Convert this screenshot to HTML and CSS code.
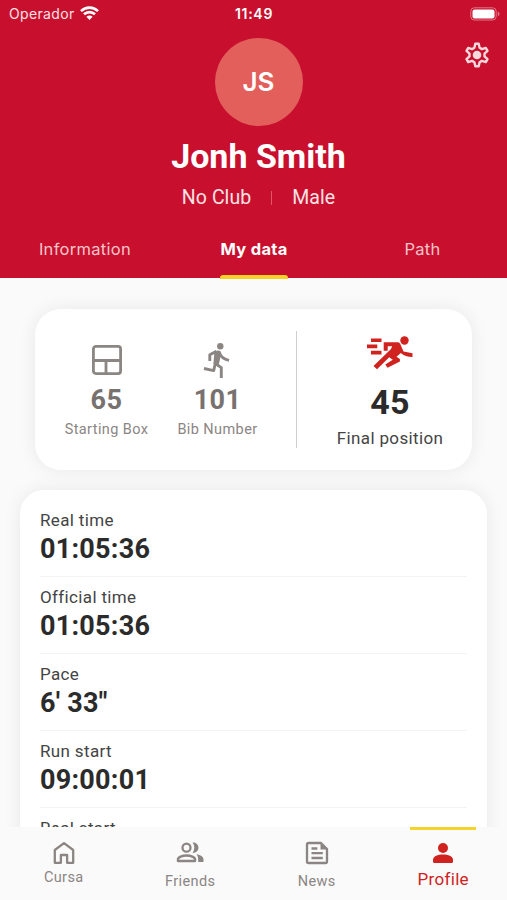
FILE: index.html
```html
<!DOCTYPE html>
<html lang="en">
<head>
<meta charset="utf-8">
<title>Profile</title>
<link rel="stylesheet" href="styles.css">
</head>
<body>
<div class="app">
  <header class="header">
    <div class="status">
      <div class="carrier"><span>Operador</span>
        <svg class="wifi" width="19" height="14" viewBox="0 0 19 14" fill="none" stroke="#fff" stroke-width="2.7"><path d="M1 5.100C5.800.4 13.200.4 18 5.100"/><path d="M4 8.300c3.200-3 7.800-3 11 0"/><path d="M6.400 10.800c1.800-1.700 4.400-1.700 6.200 0L9.500 13.900z" fill="#fff" stroke="none"/></svg>
      </div>
      <time class="clock">11:49</time>
      <svg class="battery" width="31" height="14" viewBox="0 0 31 14"><rect x=".8" y=".8" width="25.400" height="12.200" rx="3.500" fill="none" stroke="#e27886"/><rect x="2.500" y="2.500" width="22" height="9" rx="2" fill="#fff"/><path d="M27.800 4.600c2.300 1 2.300 3.800 0 4.800z" fill="#e27886"/></svg>
    </div>
    <svg class="gear" width="26" height="26" viewBox="0 0 26 26"><path d="M11.300 1.800h3.400l.9 4 2.300 1.300 3.900-1.200 1.700 2.900-3 2.800v2.800l3 2.800-1.700 2.900-3.900-1.200-2.300 1.300-.9 4h-3.400l-.9-4-2.300-1.300-3.900 1.200-1.700-2.900 3-2.800v-2.800l-3-2.800 1.700-2.900 3.900 1.200 2.300-1.300z" fill="none" stroke="#fbd9dc" stroke-width="2.400" stroke-linejoin="round"/><circle cx="13" cy="13" r="4.300" fill="#fbd9dc"/></svg>
    <div class="avatar">JS</div>
    <h1 class="name">Jonh Smith</h1>
    <div class="meta"><span>No Club</span><i class="bar"></i><span>Male</span></div>
    <nav class="tabs"><a class="tab">Information</a><a class="tab active">My data</a><a class="tab path">Path</a></nav>
  </header>
  <main class="content">
    <section class="summary">
      <div class="stat box">
        <svg width="30" height="30" viewBox="0 0 30 30" fill="none" stroke="#8b8583" stroke-width="2.800"><rect x="1.400" y="1.400" width="27.200" height="27.200" rx="2.500"/><path d="M1.400 15.500h27.200M14 15.500v13.100"/></svg>
        <strong>65</strong><span>Starting Box</span>
      </div>
      <div class="stat bib">
        <svg width="28" height="36" viewBox="0 0 28 36" fill="none" stroke="#8b8583" stroke-width="2.900" stroke-linejoin="round"><circle cx="17.300" cy="4.200" r="3.200" fill="#8b8583" stroke="none"/><path d="M13.300 9.400L6.800 12.700V19M16.500 11C18 15.500 21 17.200 26 18.300M12.500 20.500L10.700 28.600 1 26.500M12.300 21.500L18.300 25.600V36"/><path d="M11.500 8.900l4.500-.5c1.500.3 2.500 2 2 4l-2.300 10.500-5.300-.8z" fill="#8b8583" stroke="none"/></svg>
        <strong>101</strong><span>Bib Number</span>
      </div>
      <div class="rule"></div>
      <div class="final">
        <svg width="46" height="34" viewBox="0 0 46 34" fill="#d0221e"><path d="M4 2.500h10.500v3.600H4zM0 8.500h10.300v3.800H0zM4 14.800h10.500v3.800H4z"/><circle cx="37.500" cy="4.500" r="4.200"/><path d="M16.700 6.300h14.600l1.800 1.200 3.400 8 9 1.700v3.900c-5 0-8.800-1.300-11.700-4.100l-4.300 3.800 3.400 2.200v2.600l-12.400 6.200-2.200-3.400 7.500-4.600-3.600-2.600L10 33.200 6.500 29.900l17.500-17 1.200-2.700h-4.500v4.500h-4z"/></svg>
        <strong>45</strong><span>Final position</span>
      </div>
    </section>
    <section class="results">
      <div class="row"><span>Real time</span><strong>01:05:36</strong></div>
      <div class="row"><span>Official time</span><strong>01:05:36</strong></div>
      <div class="row"><span>Pace</span><strong>6' 33"</strong></div>
      <div class="row"><span>Run start</span><strong>09:00:01</strong></div>
      <div class="row"><span>Real start</span></div>
    </section>
  </main>
  <nav class="bottom">
    <a class="item cursa"><svg width="24" height="24" viewBox="0 0 24 24" fill="none" stroke="#8b8583" stroke-width="2.300" stroke-linejoin="round"><path d="M2.800 9L12 2.200 21.200 9v12.800h-6.100V14H8.900v7.800H2.800z"/></svg><span>Cursa</span></a>
    <a class="item"><svg width="28" height="24" viewBox="0 0 28 24" fill="none" stroke="#8b8583" stroke-width="2.300"><circle cx="10.500" cy="6.700" r="4"/><path d="M1.900 20v-1.500c0-2.300 4.400-4 8.600-4s8.600 1.700 8.600 4V20z" stroke-linejoin="round"/><path d="M16.500 1.500c7.600-.6 8.400 10.400 0 10.400 2.400-3 2.400-7.400 0-10.400zM20.500 13.300c4 .7 7 2.300 7 5.300v2.500h-5.300v-2.600c0-2-.5-3.700-1.700-5.200z" fill="#8b8583" stroke="none"/></svg><span>Friends</span></a>
    <a class="item"><svg width="24" height="24" viewBox="0 0 24 24" fill="none" stroke="#8b8583" stroke-width="2.300" stroke-linejoin="round"><path d="M3.500 2H16l6 6v12.500a1.500 1.500 0 0 1-1.500 1.500h-17A1.500 1.500 0 0 1 2 20.500v-17A1.500 1.500 0 0 1 3.500 2zM6.500 7.500h5.800M6.500 12.200h11.300M6.500 17h11.300"/><path d="M15.500 2v6.500H22z" fill="#8b8583" stroke="none"/></svg><span>News</span></a>
    <a class="item profile"><svg width="20" height="20" viewBox="0 0 20 20" fill="#d0221e"><circle cx="10" cy="5" r="5"/><path d="M0 18.500v-1.700C0 13.500 5 11.600 10 11.600s10 1.900 10 5.200v1.700q0 1.500-1.500 1.500h-17Q0 20 0 18.500z"/></svg><span>Profile</span></a>
  </nav>
</div>
</body>
</html>
```
FILE: styles.css
```css
* { box-sizing: border-box; }
body { margin: 0; font-family: Roboto, sans-serif; background: #fafafa; }
.app { height: 900px; display: flex; flex-direction: column; overflow: hidden; }
svg { display: block; flex: none; }

.header { position: relative; height: 278px; flex: none; background: #c8102e; color: #fff; display: flex; flex-direction: column; align-items: center; }
.status { width: 100%; height: 28px; padding: 0 6px 0 9px; display: grid; grid-template-columns: 1fr auto 1fr; align-items: center; font-family: Inter, sans-serif; font-size: 14px; }
.carrier { display: flex; align-items: center; gap: 5px; letter-spacing: .35px; color: #fbe2e5; }
.carrier span, .clock { margin-top: -1px; }
.wifi { margin-top: -2px; }
.clock { font-weight: 600; font-size: 14px; letter-spacing: .7px; margin-left: -2px; }
.battery { justify-self: end; margin-top: -1px; }
.gear { position: absolute; left: 464px; top: 42px; }
.avatar { width: 88px; height: 88px; margin: 10px 0 0 10px; border-radius: 50%; background: #e25f5c; display: flex; align-items: center; justify-content: center; font: 600 26px Inter, sans-serif; padding-bottom: 2px; }
.name { margin: 10px 0 0 10px; font-size: 34px; line-height: 40px; font-weight: 700; letter-spacing: 0; }
.meta { margin: 10px 0 0 10px; display: flex; align-items: center; font-size: 19.500px; line-height: 24px; letter-spacing: .05px; color: #fbe2e5; }
.bar { width: 1px; height: 14px; margin: 0 20px; background: #e05668; }
.tabs { width: 100%; margin-top: auto; display: grid; grid-template-columns: repeat(3, 169px); justify-items: center; font: 16.500px Inter, sans-serif; letter-spacing: .3px; }
.tab { height: 44px; line-height: 30px; color: #f7c4cb; margin-left: 1px; }
.tab.active { position: relative; color: #fff; font-weight: 700; }
.tab.active::after { content: ""; position: absolute; left: 0; right: 0; bottom: -1px; height: 4px; border-radius: 3px 3px 0 0; background: #f5d025; }
.tab.path { margin-left: 0; }

.content { flex: 1; min-height: 0; overflow: hidden; padding: 31px 20px 0; }
.summary { height: 161px; margin: 0 15px; border-radius: 26px; background: #fff; box-shadow: 0 0 18px rgba(0,0,0,.075); display: flex; align-items: flex-start; }
.stat { display: flex; flex-direction: column; align-items: center; flex: none; width: 111px; color: #8b8583; font-size: 14.500px; letter-spacing: .4px; white-space: nowrap; }
.stat svg { height: 36px; }
.stat strong { font-size: 27px; line-height: 32px; margin-top: 6px; color: #777170; letter-spacing: .4px; }
.stat span { line-height: 20px; margin-top: 4px; }
.box { margin-left: 16px; padding-top: 33px; }
.bib { padding-top: 33px; }
.bib svg { margin-left: -2px; }
.rule { flex: none; width: 1px; height: 117px; margin: 22px 0 0 23px; background: #cfcfcf; }
.final { flex: none; width: 186px; display: flex; flex-direction: column; align-items: center; padding-top: 27px; color: #444; font-size: 17px; letter-spacing: .35px; }
.final strong { font-size: 34px; line-height: 40px; margin-top: 12px; color: #2b2b2b; }
.final span { line-height: 24px; margin-top: 4px; }
.results { margin-top: 20px; height: 460px; padding: 10px 20px; border-radius: 24px; background: #fff; box-shadow: 0 0 18px rgba(0,0,0,.075); }
.row { height: 76.900px; display: flex; flex-direction: column; border-bottom: 1px solid #f3f3f3; padding-top: 9px; }
.row span { font-size: 17px; line-height: 22px; letter-spacing: .35px; color: #444; }
.row strong { font-size: 27px; line-height: 36px; letter-spacing: .25px; color: #2b2b2b; }

.bottom { height: 73px; flex: none; display: grid; grid-template-columns: repeat(4, 126.500px); background: #fafafa; position: relative; z-index: 1; }
.item { display: flex; flex-direction: column; align-items: center; padding-top: 14px; padding-left: 1px; color: #8b8583; font-size: 14.500px; line-height: 20px; letter-spacing: .4px; }
.item span { margin-top: 7px; }
.item svg { height: 24px; }
.cursa span { margin-top: 3px; }
.profile { position: relative; color: #d0221e; font-size: 17px; letter-spacing: .3px; }
.profile::before { content: ""; position: absolute; top: 0; width: 66px; height: 3px; background: #f5d32f; }
.profile span { margin-top: 4px; }
```
